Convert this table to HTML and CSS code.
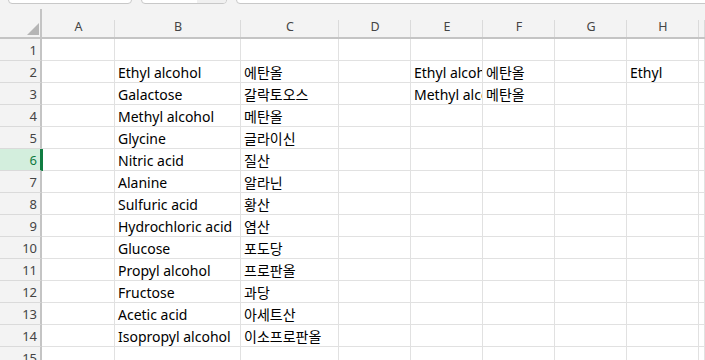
FILE: index.html
```html
<!DOCTYPE html>
<html lang="ko">
<head>
<meta charset="utf-8">
<link rel="stylesheet" href="styles.css">
</head>
<body>
<div class="app">
  <div class="toolbar">
    <div class="box namebox"></div>
    <div class="box fxbox"><span class="fxpart"></span></div>
    <div class="box formula"></div>
  </div>
  <div class="sheet">
    <div class="corner"><span class="tri"></span></div>
    <div class="colhead">A</div><div class="colhead">B</div><div class="colhead">C</div><div class="colhead">D</div><div class="colhead">E</div><div class="colhead">F</div><div class="colhead">G</div><div class="colhead">H</div><div class="colhead last"></div>

    <div class="rowhead">1</div><div class="cell"></div><div class="cell"></div><div class="cell"></div><div class="cell"></div><div class="cell"></div><div class="cell"></div><div class="cell"></div><div class="cell"></div><div class="cell"></div>
    <div class="rowhead">2</div><div class="cell"></div><div class="cell">Ethyl alcohol</div><div class="cell">에탄올</div><div class="cell"></div><div class="cell">Ethyl alcohol</div><div class="cell">에탄올</div><div class="cell"></div><div class="cell">Ethyl</div><div class="cell"></div>
    <div class="rowhead">3</div><div class="cell"></div><div class="cell">Galactose</div><div class="cell">갈락토오스</div><div class="cell"></div><div class="cell">Methyl alcohol</div><div class="cell">메탄올</div><div class="cell"></div><div class="cell"></div><div class="cell"></div>
    <div class="rowhead">4</div><div class="cell"></div><div class="cell">Methyl alcohol</div><div class="cell">메탄올</div><div class="cell"></div><div class="cell"></div><div class="cell"></div><div class="cell"></div><div class="cell"></div><div class="cell"></div>
    <div class="rowhead">5</div><div class="cell"></div><div class="cell">Glycine</div><div class="cell">글라이신</div><div class="cell"></div><div class="cell"></div><div class="cell"></div><div class="cell"></div><div class="cell"></div><div class="cell"></div>
    <div class="rowhead selected">6</div><div class="cell"></div><div class="cell">Nitric acid</div><div class="cell">질산</div><div class="cell"></div><div class="cell"></div><div class="cell"></div><div class="cell"></div><div class="cell"></div><div class="cell"></div>
    <div class="rowhead">7</div><div class="cell"></div><div class="cell">Alanine</div><div class="cell">알라닌</div><div class="cell"></div><div class="cell"></div><div class="cell"></div><div class="cell"></div><div class="cell"></div><div class="cell"></div>
    <div class="rowhead">8</div><div class="cell"></div><div class="cell">Sulfuric acid</div><div class="cell">황산</div><div class="cell"></div><div class="cell"></div><div class="cell"></div><div class="cell"></div><div class="cell"></div><div class="cell"></div>
    <div class="rowhead">9</div><div class="cell"></div><div class="cell">Hydrochloric acid</div><div class="cell">염산</div><div class="cell"></div><div class="cell"></div><div class="cell"></div><div class="cell"></div><div class="cell"></div><div class="cell"></div>
    <div class="rowhead">10</div><div class="cell"></div><div class="cell">Glucose</div><div class="cell">포도당</div><div class="cell"></div><div class="cell"></div><div class="cell"></div><div class="cell"></div><div class="cell"></div><div class="cell"></div>
    <div class="rowhead">11</div><div class="cell"></div><div class="cell">Propyl alcohol</div><div class="cell">프로판올</div><div class="cell"></div><div class="cell"></div><div class="cell"></div><div class="cell"></div><div class="cell"></div><div class="cell"></div>
    <div class="rowhead">12</div><div class="cell"></div><div class="cell">Fructose</div><div class="cell">과당</div><div class="cell"></div><div class="cell"></div><div class="cell"></div><div class="cell"></div><div class="cell"></div><div class="cell"></div>
    <div class="rowhead">13</div><div class="cell"></div><div class="cell">Acetic acid</div><div class="cell">아세트산</div><div class="cell"></div><div class="cell"></div><div class="cell"></div><div class="cell"></div><div class="cell"></div><div class="cell"></div>
    <div class="rowhead">14</div><div class="cell"></div><div class="cell">Isopropyl alcohol</div><div class="cell">이소프로판올</div><div class="cell"></div><div class="cell"></div><div class="cell"></div><div class="cell"></div><div class="cell"></div><div class="cell"></div>
    <div class="rowhead">15</div><div class="cell"></div><div class="cell"></div><div class="cell"></div><div class="cell"></div><div class="cell"></div><div class="cell"></div><div class="cell"></div><div class="cell"></div><div class="cell"></div>
  </div>
</div>
</body>
</html>
```
FILE: styles.css
```css
html, body {
  margin: 0;
  padding: 0;
  background: #f3f3f3;
  overflow: hidden;
}
.app {
  width: 705px;
  height: 360px;
  overflow: hidden;
}
.toolbar {
  height: 9px;
  display: flex;
  gap: 9px;
  padding-left: 8px;
  overflow: hidden;
}
.box {
  height: 8px;
  margin-top: -4px;
  box-sizing: border-box;
  border: 1px solid #c8c8c8;
  border-radius: 4px;
  background: #ffffff;
}
.namebox { width: 124px; }
.fxbox {
  width: 86px;
  display: flex;
  justify-content: flex-end;
  overflow: hidden;
}
.fxpart {
  width: 29px;
  background: #f0f0f0;
}
.formula { flex: 1; margin-right: -10px; }

.sheet {
  display: grid;
  grid-template-columns: 42px 73px 126px 98px 72px 72px 72px 72px 72px 1fr;
  grid-template-rows: 30px;
  grid-auto-rows: 22px;
  font-family: "Noto Sans", "Noto Sans CJK KR", sans-serif;
}
.corner {
  position: relative;
  box-sizing: border-box;
  background: #f3f3f3;
  border-right: 2px solid #c4c4c4;
  border-bottom: 2px solid #c4c4c4;
}
.tri {
  position: absolute;
  right: 1px;
  bottom: 2px;
  width: 0;
  height: 0;
  border-left: 12px solid transparent;
  border-bottom: 12px solid #b5b5b5;
}
.colhead {
  position: relative;
  box-sizing: border-box;
  background: #f3f3f3;
  border-bottom: 2px solid #c4c4c4;
  display: flex;
  align-items: flex-end;
  justify-content: center;
  padding-bottom: 3px;
  font-size: 12.5px;
  line-height: 14px;
  color: #444444;
}
.colhead::after {
  content: "";
  position: absolute;
  right: 0;
  top: 11px;
  bottom: 0;
  width: 1px;
  background: #dadada;
}
.rowhead {
  box-sizing: border-box;
  background: #f3f3f3;
  border-right: 2px solid #c4c4c4;
  border-bottom: 1px solid #dadada;
  display: flex;
  align-items: flex-end;
  justify-content: flex-end;
  padding-right: 3px;
  padding-bottom: 2px;
  font-size: 13px;
  line-height: 15px;
  color: #444444;
}
.rowhead.selected {
  background: #d3eedd;
  color: #0e7a40;
  border-right-color: #107c41;
  box-shadow: 1px 0 0 #107c41;
  position: relative;
  z-index: 1;
}
.cell {
  box-sizing: border-box;
  background: #ffffff;
  border-right: 1px solid #e1e1e1;
  border-bottom: 1px solid #e1e1e1;
  display: flex;
  align-items: flex-end;
  padding: 0 0 0 3px;
  white-space: nowrap;
  overflow: hidden;
  font-size: 14px;
  line-height: 19px;
  color: #000000;
}
```
